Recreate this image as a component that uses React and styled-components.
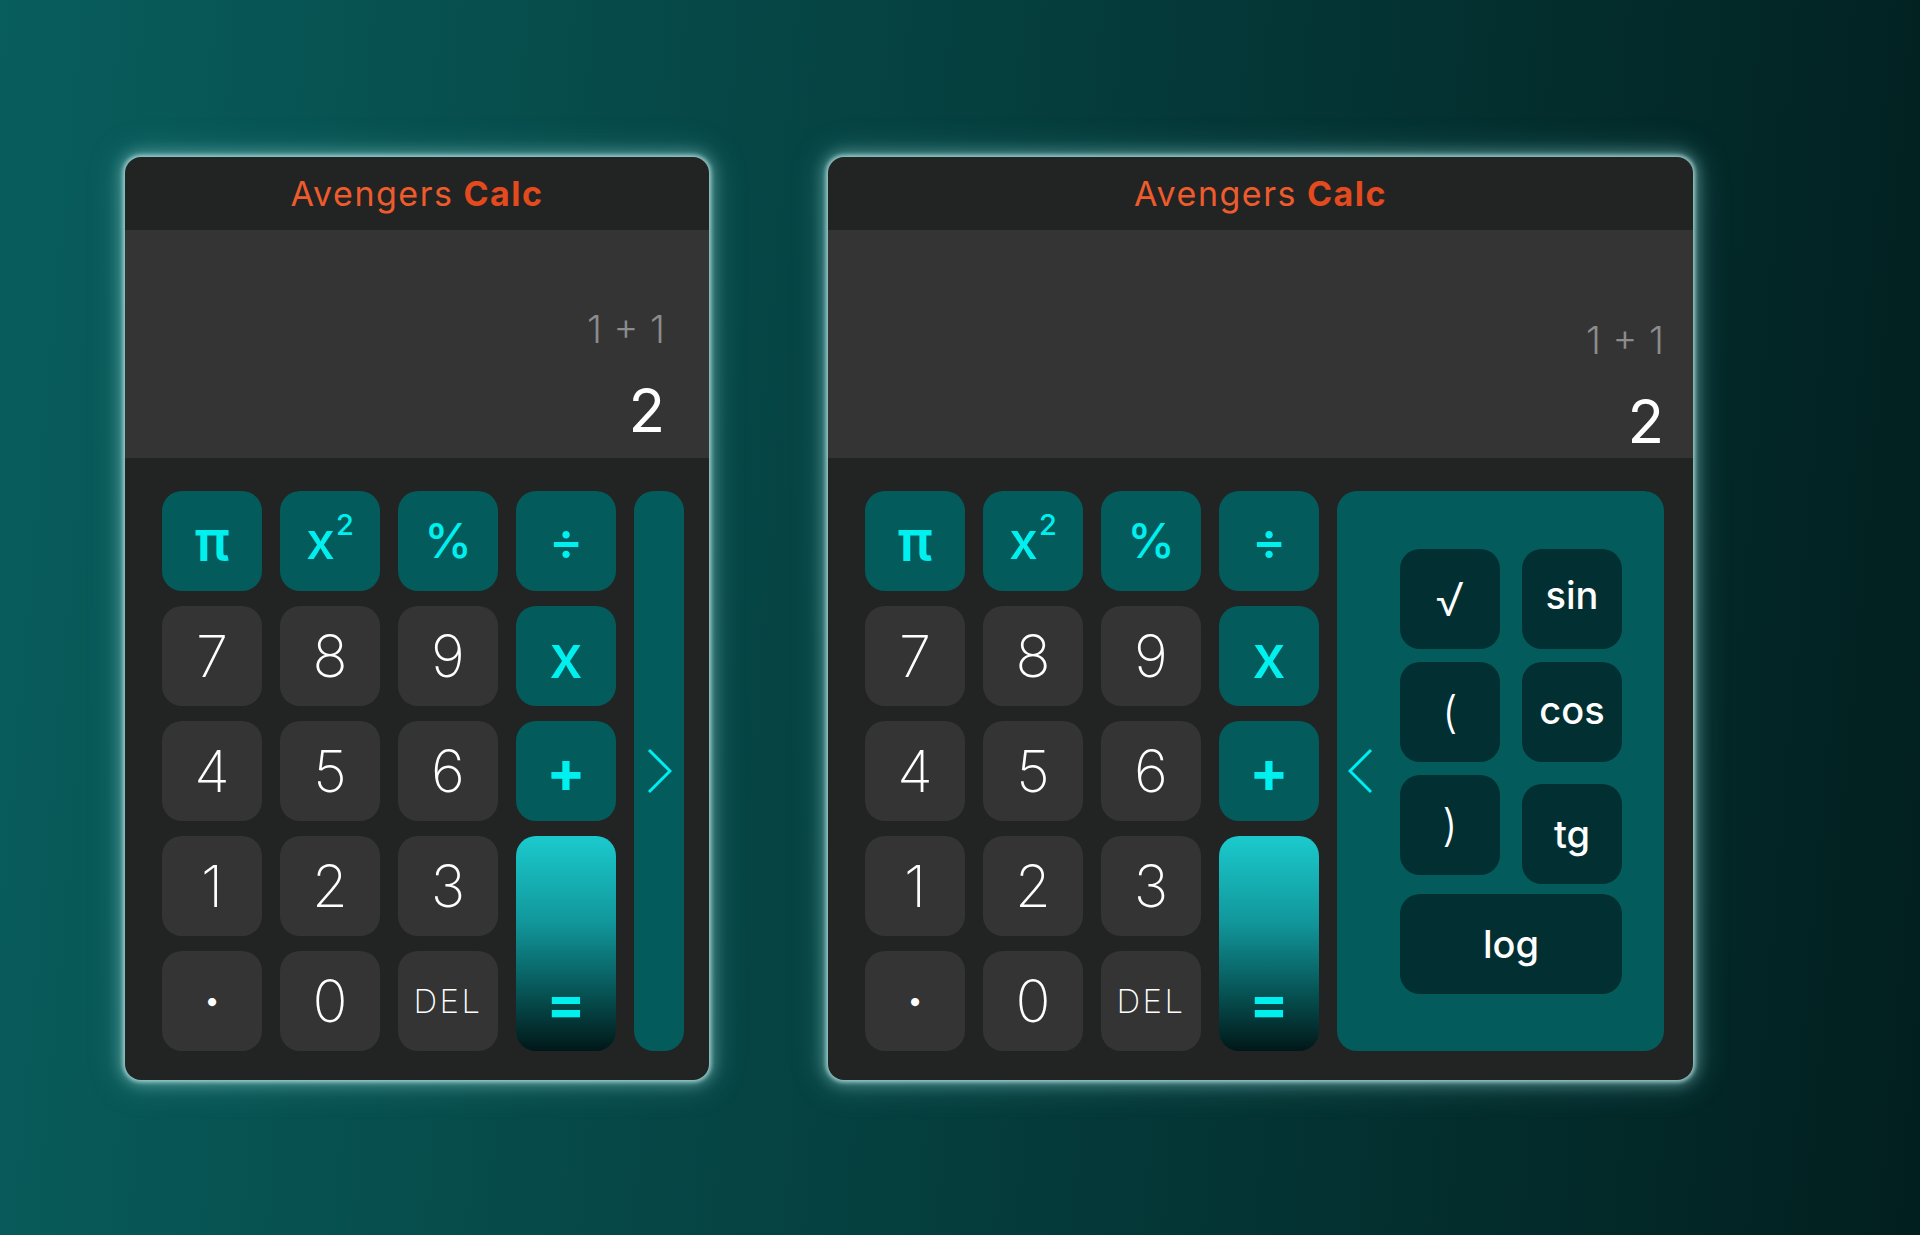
import React from "react";
import styled, { createGlobalStyle } from "styled-components";

const GlobalStyle = createGlobalStyle`
  body {
    margin: 0;
    background: linear-gradient(95deg, #085e5d 0%, #021f1f 100%);
    font-family: Inter, "Open Sans", sans-serif;
  }
`;

const Page = styled.div`
  display: flex;
  align-items: flex-start;
  gap: 119px;
  padding: 157px 0 0 125px;
  min-height: 1235px;
  box-sizing: border-box;
`;

const Card = styled.div`
  width: ${(p) => p.$w}px;
  background: #222323;
  border-radius: 16px;
  overflow: hidden;
  box-shadow: 0 0 4px 2px rgba(175, 220, 220, 0.85),
    0 0 14px 5px rgba(150, 215, 215, 0.4),
    0 0 30px 8px rgba(110, 190, 190, 0.25);
`;

const Header = styled.header`
  height: 73px;
  display: flex;
  align-items: center;
  justify-content: center;
  font-size: 34px;
  letter-spacing: 1.5px;
  color: #ee5b2c;
`;

const Strong = styled.b`
  font-weight: 700;
  color: #e34a1d;
  margin-left: 10px;
`;

const Display = styled.div`
  height: 228px;
  box-sizing: border-box;
  background: #343434;
  display: flex;
  flex-direction: column;
  align-items: flex-end;
  justify-content: flex-end;
  padding: 0 ${(p) => p.$padR}px ${(p) => p.$padB}px 0;
`;

const Expression = styled.div`
  font-size: 38px;
  line-height: 1;
  font-weight: 300;
  color: #8c8c8c;
  margin-bottom: 32px;
  word-spacing: 1px;
`;

const Result = styled.div`
  font-size: 60px;
  line-height: 1;
  font-weight: 400;
  color: #ffffff;
`;

const Keypad = styled.div`
  display: grid;
  grid-template-columns: repeat(4, 100px) ${(p) => p.$panel}px;
  grid-template-rows: repeat(5, 100px);
  column-gap: 18px;
  row-gap: 15px;
  padding: 33px ${(p) => p.$padR}px 29px 37px;
`;

const Key = styled.button`
  border: 0;
  padding: 0;
  border-radius: 20px;
  display: flex;
  align-items: center;
  justify-content: center;
  font-family: inherit;
  line-height: 1;
  cursor: pointer;
  background: ${(p) => (p.$op ? "#035b5c" : "#343434")};
  color: ${(p) => (p.$op ? "#00f0f0" : "#ffffff")};
  font-size: ${(p) => p.$size || 58}px;
  font-weight: ${(p) => p.$weight || 200};
  letter-spacing: ${(p) => p.$ls || 0}px;
`;

const Sup = styled.sup`
  font-size: 29px;
  vertical-align: 0;
  position: relative;
  top: -17px;
  margin-left: 1px;
`;

const Equals = styled(Key)`
  grid-column: 4;
  grid-row: 4 / span 2;
  align-items: flex-end;
  padding-bottom: 19px;
  background: linear-gradient(180deg, #1bcacd 0%, #11979b 40%, #075556 72%, #011718 100%);
  color: #00f0f0;
  font-weight: 700;
`;

const SidePanel = styled.div`
  grid-column: 5;
  grid-row: 1 / span 5;
  background: #035b5c;
  border-radius: 20px;
  display: flex;
  align-items: center;
  justify-content: ${(p) => (p.$open ? "flex-start" : "center")};
  padding-left: ${(p) => (p.$open ? 11 : 0)}px;
  gap: 27px;
`;

const SciBlock = styled.div`
  display: flex;
  flex-direction: column;
  gap: 10px;
`;

const SciCols = styled.div`
  display: flex;
  gap: 22px;
`;

const SciCol = styled.div`
  display: flex;
  flex-direction: column;
  gap: 13px;
`;

const SciKey = styled.button`
  border: 0;
  padding: 0 0 ${(p) => p.$lift || 0}px;
  width: ${(p) => p.$w || 100}px;
  height: 100px;
  margin-top: ${(p) => p.$shift || 0}px;
  border-radius: 20px;
  background: #022f31;
  color: #ffffff;
  font-family: inherit;
  font-size: ${(p) => p.$size || 38}px;
  font-weight: ${(p) => p.$weight || 500};
  line-height: 1;
  display: flex;
  align-items: center;
  justify-content: center;
  cursor: pointer;
`;

const Chevron = ({ left }) => (
  <svg width="25" height="46" viewBox="0 0 25 46">
    <polyline
      points={left ? "23,2 2,23 23,44" : "2,2 23,23 2,44"}
      fill="none"
      stroke="#00eef0"
      strokeWidth="3"
    />
  </svg>
);

function Calculator({ open }) {
  return (
    <Card $w={open ? 865 : 584}>
      <Header>
        Avengers<Strong>Calc</Strong>
      </Header>
      <Display $padR={open ? 29 : 44} $padB={open ? 7 : 18}>
        <Expression>1 + 1</Expression>
        <Result>2</Result>
      </Display>
      <Keypad $panel={open ? 327 : 50} $padR={open ? 29 : 25}>
        <Key $op $size={56} $weight={600}>π</Key>
        <Key $op $size={52} $weight={500}>
          x<Sup>2</Sup>
        </Key>
        <Key $op $size={48} $weight={500}>%</Key>
        <Key $op $size={52} $weight={500}>÷</Key>
        <SidePanel $open={open}>
          <Chevron left={open} />
          {open && (
            <SciBlock>
              <SciCols>
                <SciCol>
                  <SciKey $size={46} $weight={300}>√</SciKey>
                  <SciKey $size={44} $weight={300}>(</SciKey>
                  <SciKey $size={44} $weight={300}>)</SciKey>
                </SciCol>
                <SciCol>
                  <SciKey $lift={8}>sin</SciKey>
                  <SciKey $lift={4}>cos</SciKey>
                  <SciKey $shift={9}>tg</SciKey>
                </SciCol>
              </SciCols>
              <SciKey $w={222}>log</SciKey>
            </SciBlock>
          )}
        </SidePanel>
        <Key>7</Key>
        <Key>8</Key>
        <Key>9</Key>
        <Key $op $size={60} $weight={500}>x</Key>
        <Key>4</Key>
        <Key>5</Key>
        <Key>6</Key>
        <Key $op $size={58} $weight={700}>+</Key>
        <Key>1</Key>
        <Key>2</Key>
        <Key>3</Key>
        <Equals $size={58}>=</Equals>
        <Key $size={26} $weight={400}>•</Key>
        <Key>0</Key>
        <Key $size={33} $ls={2.5}>DEL</Key>
      </Keypad>
    </Card>
  );
}

export default function App() {
  return (
    <>
      <GlobalStyle />
      <Page>
        <Calculator />
        <Calculator open />
      </Page>
    </>
  );
}
